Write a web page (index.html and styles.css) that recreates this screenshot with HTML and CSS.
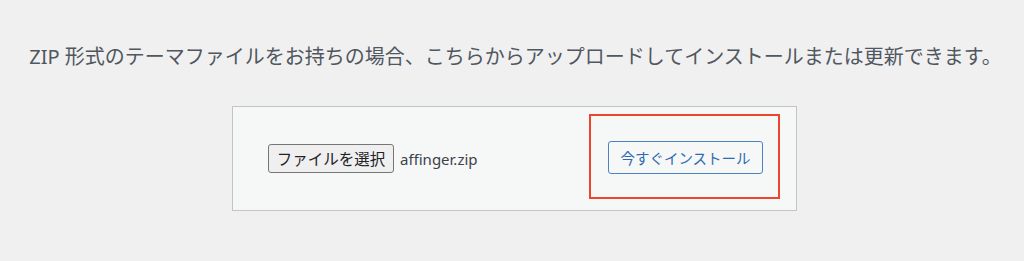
FILE: index.html
```html
<!DOCTYPE html>
<html lang="ja">
<head>
  <meta charset="UTF-8">
  <meta name="viewport" content="width=device-width, initial-scale=1.0">
  <title>テーマのアップロード</title>
  <link rel="stylesheet" href="styles.css">
</head>
<body>
  <div class="upload-theme">
    <p class="install-help">ZIP 形式のテーマファイルをお持ちの場合、こちらからアップロードしてインストールまたは更新できます。</p>

    <form class="upload-form">
      <div class="file-field">
        <button type="button" class="file-button">ファイルを選択</button>
        <span class="file-name">affinger.zip</span>
      </div>
      <!-- red annotation frame around the submit button -->
      <div class="highlight">
        <button type="button" class="install-button">今すぐインストール</button>
      </div>
    </form>
  </div>
</body>
</html>
```

FILE: styles.css
```css
body {
  margin: 0;
  background-color: #f0f0f1;
  font-family: "Noto Sans", "Noto Sans CJK JP", sans-serif;
  color: #50575e;
}
.upload-theme {
  display: flex;
  flex-direction: column;
  align-items: center;
  padding-top: 43px;
}
.install-help {
  margin: 0 0 35px 7px;
  font-size: 20px;
  line-height: 28px;
  white-space: nowrap;
}
.upload-form {
  box-sizing: border-box;
  width: 565px;
  height: 105px;
  margin-left: 5px;
  padding: 7px 16px 11px 35px;
  display: flex;
  align-items: center;
  justify-content: space-between;
  background-color: #f6f7f7;
  border: 1px solid #c3c4c7;
}
.file-field {
  display: flex;
  align-items: center;
  gap: 6px;
  margin-top: 4px;
}
.file-button {
  height: 29px;
  width: 126px;
  padding: 0;
  font-family: inherit;
  font-size: 15.5px;
  color: #1d2327;
  background-color: #efefef;
  border: 1px solid #767676;
  border-radius: 3px;
}
.file-name {
  font-size: 15px;
  color: #3c434a;
}
.highlight {
  box-sizing: border-box;
  height: 85px;
  width: 191px;
  padding: 2px 0 0 17px;
  display: flex;
  align-items: center;
  border: 2px solid #ee4530;
}
.install-button {
  height: 33px;
  width: 155px;
  padding: 0;
  font-family: inherit;
  font-size: 14.5px;
  color: #2f6aaf;
  background-color: #f6f7f7;
  border: 1px solid #4f82c2;
  border-radius: 3px;
}
```
